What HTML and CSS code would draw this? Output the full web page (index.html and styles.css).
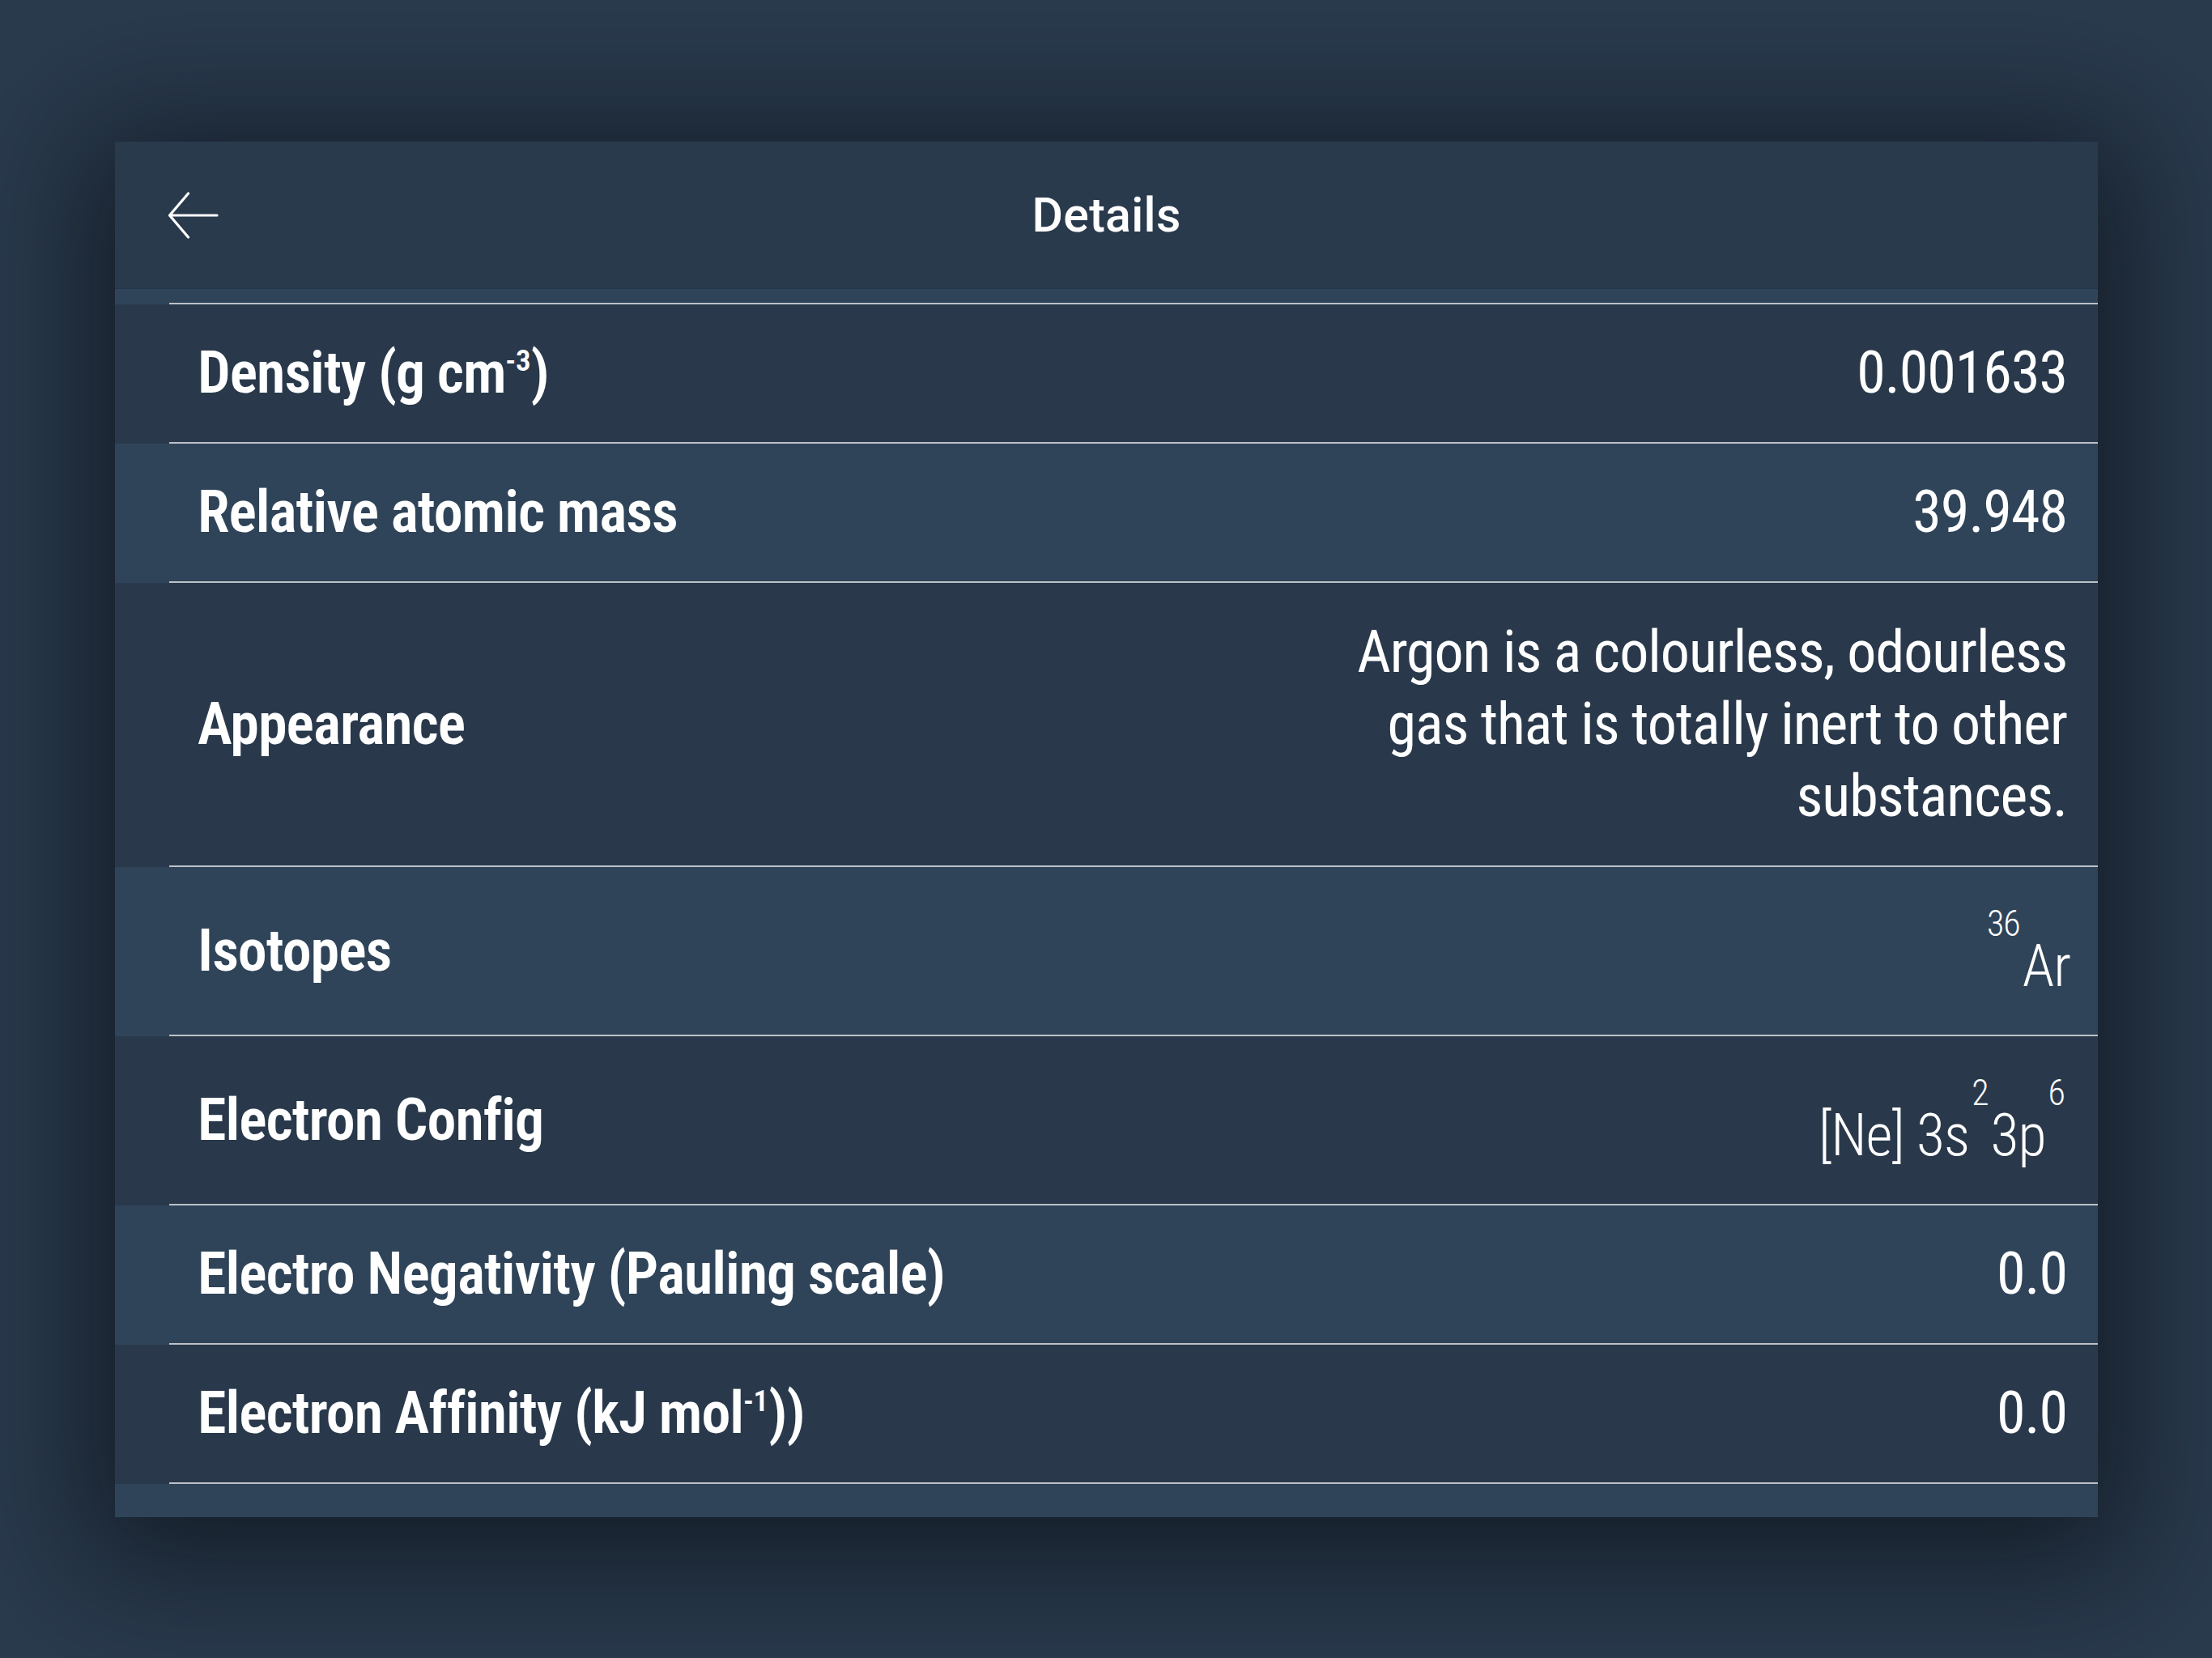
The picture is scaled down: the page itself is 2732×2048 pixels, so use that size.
FILE: index.html
```html
<!DOCTYPE html>
<html>
  <head>
    <meta charset="utf-8" />
    <title>Details</title>
    <link rel="stylesheet" href="styles.css">
  </head>
  <body>
    <div class="stage">
      <div class="card">
        <header class="topbar">
          <button class="back" aria-label="Back">
            <svg width="62" height="58" viewBox="0 0 62 58">
              <path d="M1.5 29 H60 M24.5 2 L1.5 29 L24.5 56" fill="none" stroke="#fff" stroke-width="3.2" stroke-linecap="round" stroke-linejoin="round"/>
            </svg>
          </button>
          <h1>Details</h1>
          <span></span>
        </header>

        <div class="list">
          <div class="row alt"><div class="row-inner peek"></div></div>

          <div class="row">
            <div class="row-inner">
              <span class="label">Density (g cm<sup>-3</sup>)</span>
              <span class="value">0.001633</span>
            </div>
          </div>

          <div class="row alt">
            <div class="row-inner">
              <span class="label">Relative atomic mass</span>
              <span class="value">39.948</span>
            </div>
          </div>

          <div class="row">
            <div class="row-inner prose">
              <span class="label">Appearance</span>
              <span class="value text">Argon is a colourless, odourless gas that is totally inert to other substances.</span>
            </div>
          </div>

          <div class="row alt">
            <div class="row-inner tall">
              <span class="label">Isotopes</span>
              <span class="value light edge"><sup>36</sup>Ar</span>
            </div>
          </div>

          <div class="row">
            <div class="row-inner tall">
              <span class="label">Electron Config</span>
              <span class="value light">[Ne] 3s<sup>2</sup>3p<sup>6</sup></span>
            </div>
          </div>

          <div class="row alt">
            <div class="row-inner">
              <span class="label">Electro Negativity (Pauling scale)</span>
              <span class="value">0.0</span>
            </div>
          </div>

          <div class="row">
            <div class="row-inner">
              <span class="label">Electron Affinity (kJ mol<sup>-1</sup>))</span>
              <span class="value">0.0</span>
            </div>
          </div>
        </div>
      </div>
    </div>
  </body>
</html>
```
FILE: styles.css
```css
body {
  margin: 0;
  background: #2a3b4e;
  color: #fff;
  font-family: "Roboto", "Liberation Sans", sans-serif;
}

.stage {
  height: 2048px;
  box-sizing: border-box;
  padding: 175px 0 0 142px;
  overflow: hidden;
}

.card {
  width: 2449px;
  height: 1699px;
  display: flex;
  flex-direction: column;
  background: #2a3a4d;
  box-shadow: 0 24px 150px 40px rgba(8, 12, 18, 0.62);
  overflow: hidden;
}

/* header */
.topbar {
  flex: none;
  height: 181px;
  display: grid;
  grid-template-columns: 1fr auto 1fr;
  align-items: center;
  padding: 0 66px;
  border-bottom: 1px solid #243346;
}
.back {
  justify-self: start;
  display: flex;
  padding: 0;
  border: 0;
  background: none;
  cursor: pointer;
}
.topbar h1 {
  margin: 0;
  font-size: 59px;
  font-weight: 500;
  line-height: 1;
  letter-spacing: 0.3px;
}

/* list */
.list {
  flex: 1;
  overflow: hidden;
  background: #2f4459;
}
.row {
  padding-left: 67px;
  background: #29394b;
}
.row.alt { background: #2f4459; }

.row-inner {
  box-sizing: border-box;
  min-height: 172px;
  display: flex;
  align-items: center;
  justify-content: space-between;
  gap: 40px;
  padding: 0 38px 0 35px;
  border-bottom: 2px solid #bdc1c8;
  font-size: 72px;
  font-stretch: condensed;
  letter-spacing: -1px;
  line-height: 1;
}
.row-inner.peek { min-height: 19px; }
.row-inner.tall { min-height: 209px; }
.row-inner.prose { padding-top: 41px; padding-bottom: 41px; }

.label {
  font-weight: 600;
  white-space: nowrap;
}
.label sup {
  font-size: 37px;
  line-height: 0;
  vertical-align: 27px;
  letter-spacing: 0;
}

.value {
  font-weight: 400;
  text-align: right;
  white-space: nowrap;
}
.value.light { font-weight: 300; }
.value.light sup {
  font-size: 44px;
  line-height: 1;
  vertical-align: 62px;
  padding: 0 3px;
}
.value.edge { margin-right: -4px; }
.value.text {
  max-width: 930px;
  white-space: normal;
  line-height: 89px;
}
```
